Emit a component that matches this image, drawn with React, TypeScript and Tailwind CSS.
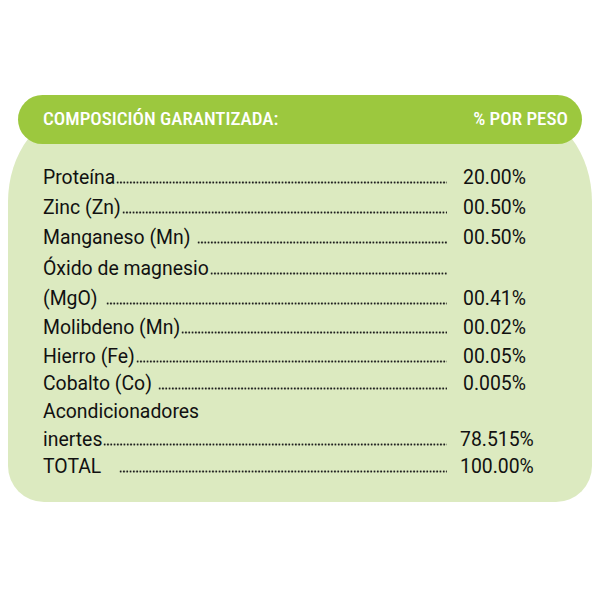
type Row = {
  label: string
  value?: string
  dots: boolean
  h: string
  gap?: string
  wide?: boolean
}

const rows: Row[] = [
  { label: 'Proteína', value: '20.00%', dots: true, h: 'h-[29px]' },
  { label: 'Zinc (Zn)', value: '00.50%', dots: true, h: 'h-[31px]' },
  { label: 'Manganeso (Mn)', value: '00.50%', dots: true, h: 'h-[30px]', gap: 'ml-[6px]' },
  { label: 'Óxido de magnesio', dots: true, h: 'h-[32px]' },
  { label: '(MgO)', value: '00.41%', dots: true, h: 'h-[28px]', gap: 'ml-[8px]' },
  { label: 'Molibdeno (Mn)', value: '00.02%', dots: true, h: 'h-[30px]' },
  { label: 'Hierro (Fe)', value: '00.05%', dots: true, h: 'h-[27px]' },
  { label: 'Cobalto (Co)', value: '0.005%', dots: true, h: 'h-[28px]', gap: 'ml-[6px]' },
  { label: 'Acondicionadores', dots: false, h: 'h-[28px]' },
  { label: 'inertes', value: '78.515%', dots: true, h: 'h-[27px]', wide: true },
  { label: 'TOTAL', value: '100.00%', dots: true, h: 'h-[27px]', gap: 'ml-[18px]', wide: true },
]

const ListRow = ({ label, value, dots, h, gap, wide }: Row) => (
  <div className={`flex flex-row items-center ${h}`}>
    <div className="flex w-[404px] flex-row items-baseline">
      <span className="whitespace-nowrap">{label}</span>
      {dots && (
        <span
          className={`h-[3px] flex-1 bg-[radial-gradient(circle,#1e1e1e_0.8px,transparent_1.3px)] bg-[length:3.3px_3px] bg-repeat-x ${gap ?? 'ml-[1px]'}`}
        />
      )}
    </div>
    <span className={wide ? 'ml-[13px]' : 'ml-[16px]'}>{value}</span>
  </div>
)

export default function App() {
  return (
    <div className="h-[600px] w-[600px] bg-white pt-[95px]">
      <div className="mx-[8px] flex flex-col">
        <div className="relative z-10 mx-[10px] flex h-[49px] flex-row items-center justify-between rounded-full bg-[#9cc83e] pl-[25px] pr-[14px] text-[19px] font-medium text-white [font-family:'Roboto_Condensed','Liberation_Sans_Narrow','DejaVu_Sans_Condensed',sans-serif]">
          <span>COMPOSICIÓN GARANTIZADA:</span>
          <span>% POR PESO</span>
        </div>
        <div className="-mt-[32px] rounded-b-[36px] rounded-tl-[70px_90px] rounded-tr-[70px_90px] bg-[#dceac0] pb-[22px] pl-[35px] pt-[51px] text-[19.4px] leading-none text-[#111] [font-family:Roboto,sans-serif]">
          {rows.map((r, i) => (
            <ListRow key={`row-${i}`} {...r} />
          ))}
        </div>
      </div>
    </div>
  )
}
